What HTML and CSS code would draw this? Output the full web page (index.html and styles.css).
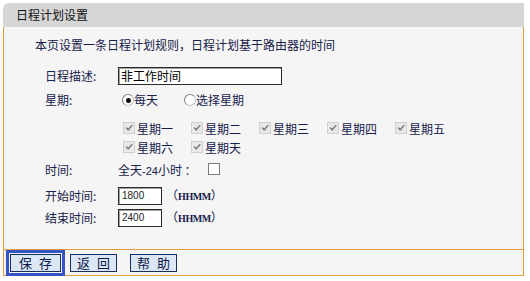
FILE: index.html
```html
<!DOCTYPE html>
<html lang="zh-CN">
<head>
<meta charset="utf-8">
<title>日程计划设置</title>
<link rel="stylesheet" href="styles.css">
</head>
<body>
<div class="panel">
  <div class="head">日程计划设置</div>
  <div class="main">
    <p class="intro">本页设置一条日程计划规则，日程计划基于路由器的时间</p>
    <div class="form">
      <div class="row r-desc">
        <span class="label">日程描述:</span>
        <span class="field wide">非工作时间</span>
      </div>
      <div class="row r-week">
        <span class="label">星期:</span>
        <span class="opt"><span class="radio on"></span>每天</span>
        <span class="opt second"><span class="radio"></span>选择星期</span>
      </div>
      <div class="days">
        <span class="day"><span class="cb"><svg viewBox="0 0 12 12"><path d="M2.5 5.5 L5 8.2 L9.8 2.8"/></svg></span>星期一</span>
        <span class="day"><span class="cb"><svg viewBox="0 0 12 12"><path d="M2.5 5.5 L5 8.2 L9.8 2.8"/></svg></span>星期二</span>
        <span class="day"><span class="cb"><svg viewBox="0 0 12 12"><path d="M2.5 5.5 L5 8.2 L9.8 2.8"/></svg></span>星期三</span>
        <span class="day"><span class="cb"><svg viewBox="0 0 12 12"><path d="M2.5 5.5 L5 8.2 L9.8 2.8"/></svg></span>星期四</span>
        <span class="day"><span class="cb"><svg viewBox="0 0 12 12"><path d="M2.5 5.5 L5 8.2 L9.8 2.8"/></svg></span>星期五</span>
        <span class="day"><span class="cb"><svg viewBox="0 0 12 12"><path d="M2.5 5.5 L5 8.2 L9.8 2.8"/></svg></span>星期六</span>
        <span class="day"><span class="cb"><svg viewBox="0 0 12 12"><path d="M2.5 5.5 L5 8.2 L9.8 2.8"/></svg></span>星期天</span>
      </div>
      <div class="row r-time">
        <span class="label">时间:</span>
        <span class="allday">全天<span class="num">-24</span>小时 ：</span>
        <span class="box"></span>
      </div>
      <div class="row r-start">
        <span class="label">开始时间:</span>
        <span class="field small">1800</span>
        <span class="fmt">（<b>HHMM</b>）</span>
      </div>
      <div class="row r-end">
        <span class="label">结束时间:</span>
        <span class="field small">2400</span>
        <span class="fmt">（<b>HHMM</b>）</span>
      </div>
    </div>
  </div>
  <div class="foot">
    <button class="btn save">保 存</button>
    <button class="btn back">返 回</button>
    <button class="btn help">帮 助</button>
  </div>
</div>
</body>
</html>
```

FILE: styles.css
```css
* { box-sizing: border-box; }
html, body { margin: 0; background: #ffffff; }
body {
  font-family: "Noto Sans CJK SC", "Noto Sans", sans-serif;
  font-size: 12px;
  color: #16204a;
}
.panel { margin: 3px 0 0 3px; width: 521px; }
.head {
  height: 24px;
  line-height: 24px;
  background: #d6d6d6;
  border-top-left-radius: 6px;
  padding-left: 13px;
  color: #111111;
}
.main {
  background: #f5f5f5;
  border: 1px solid #e39b42;
  border-top: 0;
  height: 223px;
  padding: 10px 0 0 31px;
}
.intro { margin: 0; line-height: 16px; }
.form { margin-left: 10px; }
.row { display: flex; align-items: center; height: 18px; line-height: 18px; }
.label { width: 73px; flex: none; }
.r-desc { margin-top: 14px; }
.r-week { margin-top: 6px; }
.r-time { margin-top: 5px; }
.r-start { margin-top: 8px; }
.r-end { margin-top: 4px; }

.field {
  display: block;
  height: 18px;
  line-height: 16px;
  background: #ffffff;
  border: 1px solid #2b2b2b;
  box-shadow: inset 1px 1px 0 #a0a0a0;
  color: #000000;
}
.field.wide { width: 164px; padding-left: 2px; }
.field.small {
  width: 44px;
  padding-left: 3px;
  font-family: "Liberation Sans", Arial, sans-serif;
  font-size: 10px;
  color: #222222;
}

.opt { display: flex; align-items: center; }
.opt.second { margin-left: 26px; }
.radio {
  width: 12px;
  height: 12px;
  margin-left: 4px;
  border-radius: 50%;
  border: 1px solid #808080;
  border-bottom-color: #c4c4c4;
  border-right-color: #c4c4c4;
  background: #ffffff;
  display: flex;
  align-items: center;
  justify-content: center;
}
.opt.second .radio { margin-left: 0; }
.radio.on::after {
  content: "";
  width: 5px;
  height: 5px;
  border-radius: 50%;
  background: #111111;
}

.days {
  margin-top: 10px;
  margin-left: 73px;
  display: grid;
  grid-template-columns: repeat(5, 68px);
  grid-auto-rows: 18px;
  row-gap: 1px;
}
.day { display: flex; align-items: center; padding-left: 5px; }
.cb {
  width: 12px;
  height: 12px;
  margin-right: 2px;
  border: 1px solid #cfcfcf;
  background: #e9e9e9;
  display: flex;
}
.cb svg { width: 10px; height: 10px; }
.cb path { fill: none; stroke: #7d7d7d; stroke-width: 1.8; }

.allday { display: block; }
.num { font-family: "Liberation Sans", Arial, sans-serif; font-size: 11px; }
.box {
  width: 12px;
  height: 12px;
  margin-left: 11px;
  margin-top: -2px;
  border: 1px solid #7a7a7a;
  background: #ffffff;
}
.fmt { margin-left: 4px; color: #16204a; }
.fmt b {
  font-family: "Liberation Serif", "Times New Roman", serif;
  font-size: 10px;
  font-weight: bold;
  letter-spacing: -0.4px;
}

.foot {
  height: 26px;
  border: 1px solid #e39b42;
  border-top: 0;
  background: #f5f5f5;
  display: flex;
  align-items: center;
  padding-left: 6px;
}
.btn {
  height: 18px;
  padding: 0;
  border: 1px solid #1a2c5c;
  background: #dce7f5;
  color: #0c1a4a;
  font-family: "Noto Sans CJK SC", "Noto Sans", sans-serif;
  font-size: 13px;
  line-height: 16px;
  word-spacing: 4px;
}
.btn.save { width: 51px; outline: 3px solid #3555c4; outline-offset: 1px; }
.btn.back { width: 47px; margin-left: 9px; }
.btn.help { width: 47px; margin-left: 13px; }
```
